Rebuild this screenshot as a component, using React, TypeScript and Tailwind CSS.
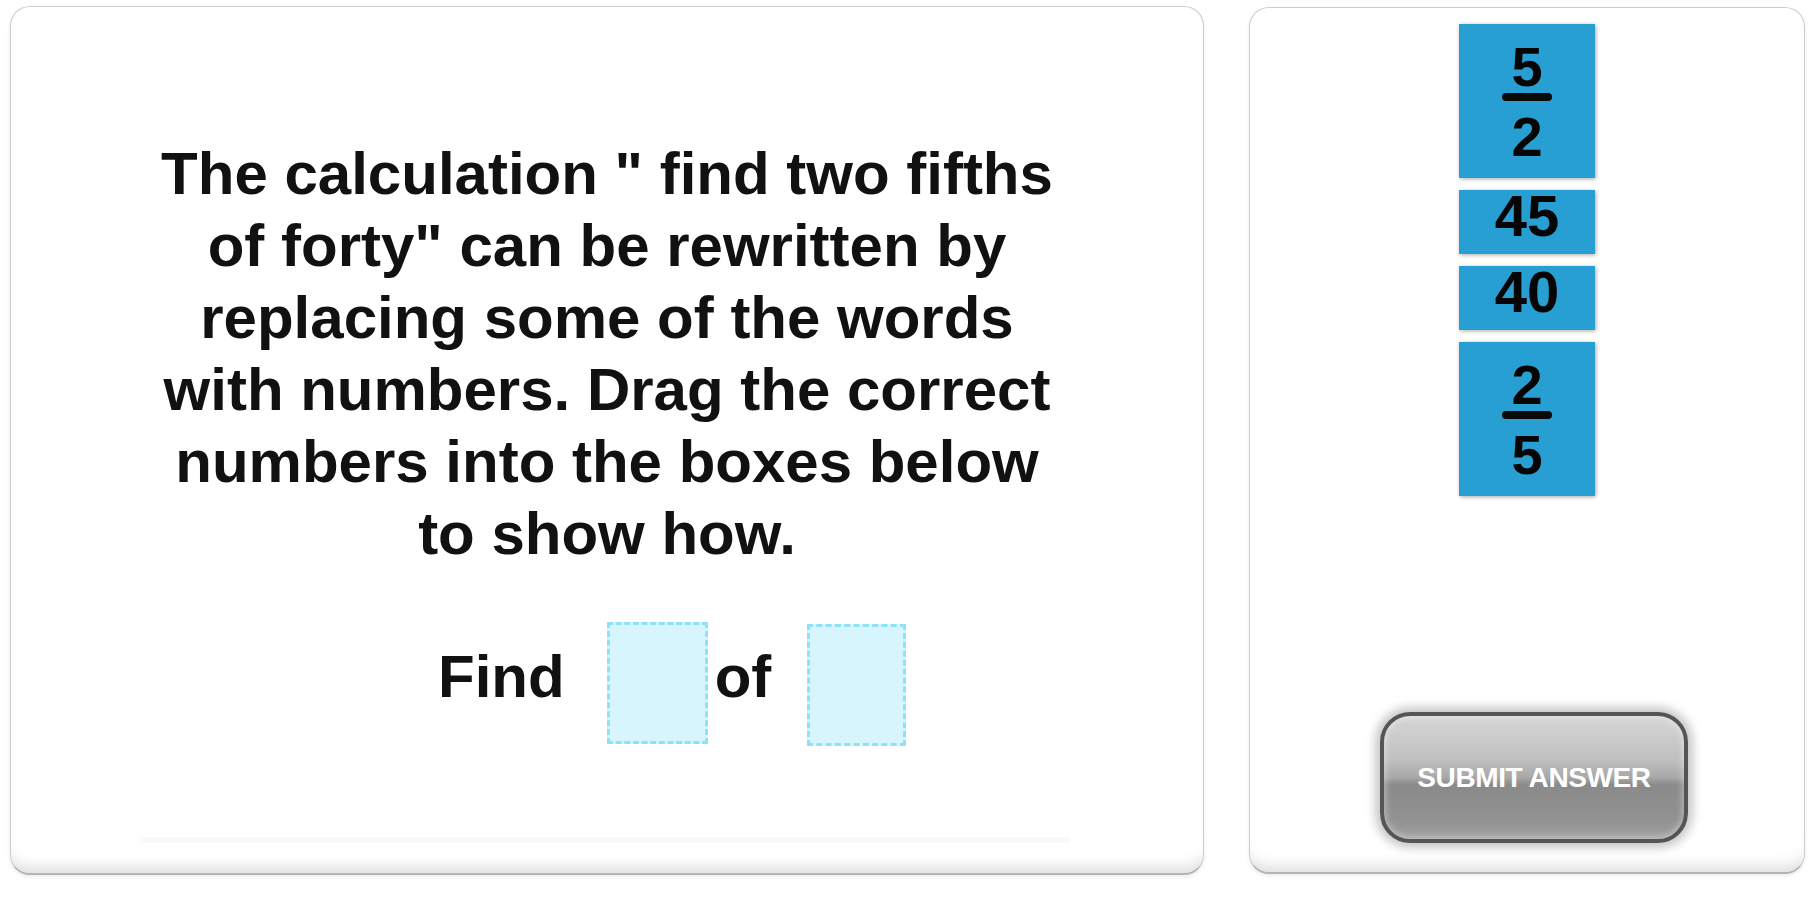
import React from "react"

const font = { fontFamily: '"Liberation Sans", Arial, Helvetica, sans-serif' }

function Fraction({ top, bottom }: { top: string; bottom: string }) {
  return (
    <div className="flex flex-col items-center pt-[23px]">
      <span className="block h-[40px] text-[56px] leading-[40px]">{top}</span>
      <span className="mt-[6px] block h-[8px] w-[50px] rounded-full bg-[#0a0a0a]" />
      <span className="mt-[16px] block h-[40px] text-[56px] leading-[40px]">{bottom}</span>
    </div>
  )
}

function Tile({ children, tall }: { children: React.ReactNode; tall?: boolean }) {
  return (
    <div
      className={
        "flex w-[136px] justify-center bg-[#289fd3] font-bold text-[#050505] shadow-[1px_1px_4px_rgba(0,0,0,0.35)] " +
        (tall ? "h-[154px]" : "h-[64px]")
      }
    >
      {children}
    </div>
  )
}

function DropBox({ className }: { className?: string }) {
  return (
    <div className={"h-[122px] border-[3px] border-dashed border-[#8ee2f8] bg-[#d7f5fc] " + (className ?? "")} />
  )
}

export default function App() {
  return (
    <div className="min-h-screen bg-white" style={font}>
      <div className="flex gap-[45px] pl-[10px] pt-[6px]">
        {/* question card */}
        <div className="flex h-[869px] w-[1194px] shrink-0 flex-col rounded-[20px] border border-[#cdcdcd] border-b-2 border-b-[#b4b4b4] bg-white shadow-[inset_0_-16px_14px_-10px_rgba(0,0,0,0.13),0_2px_4px_rgba(0,0,0,0.08)]">
          <p className="pt-[131px] text-center text-[60px] font-bold leading-[72px] text-[#111]">
            The calculation " find two fifths
            <br />
            of forty" can be rewritten by
            <br />
            replacing some of the words
            <br />
            with numbers. Drag the correct
            <br />
            numbers into the boxes below
            <br />
            to show how.
          </p>

          <div className="mt-[52px] ml-[427px] flex items-start text-[60px] font-bold leading-[72px] text-[#111]">
            <span className="mt-[19px]">Find</span>
            <DropBox className="ml-[42px] w-[101px]" />
            <span className="mt-[19px] ml-[7px]">of</span>
            <DropBox className="ml-[36px] mt-[2px] w-[99px]" />
          </div>

          <div className="mt-auto mb-[30px] ml-[129px] h-[6px] w-[930px] bg-[#f9f9f9]" />
        </div>

        {/* answers card */}
        <div className="mt-[1px] flex h-[867px] w-[556px] shrink-0 flex-col rounded-[20px] border border-[#cdcdcd] border-b-2 border-b-[#b4b4b4] bg-white shadow-[inset_0_-16px_14px_-10px_rgba(0,0,0,0.13),0_2px_4px_rgba(0,0,0,0.08)]">
          <div className="flex flex-col items-center gap-[12px] pt-[16px]">
            <Tile tall>
              <Fraction top="5" bottom="2" />
            </Tile>
            <Tile>
              <span className="mt-[5px] block h-[42px] text-[58px] leading-[42px]">45</span>
            </Tile>
            <Tile>
              <span className="mt-[5px] block h-[42px] text-[58px] leading-[42px]">40</span>
            </Tile>
            <Tile tall>
              <Fraction top="2" bottom="5" />
            </Tile>
          </div>

          <button className="mt-auto mb-[29px] ml-[130px] flex h-[131px] w-[308px] items-center justify-center rounded-[30px] border-[4px] border-[#555555] bg-[linear-gradient(to_bottom,#d6d6d6,#c0c0c0_35%,#a8a8a8_50%,#8a8a8a_56%,#929292_85%,#a2a2a2)] shadow-[0_0_10px_5px_rgba(0,0,0,0.22),inset_0_0_6px_2px_rgba(255,255,255,0.35)]">
            <span className="text-[28px] font-bold tracking-[-0.4px] text-white">SUBMIT ANSWER</span>
          </button>
        </div>
      </div>
    </div>
  )
}
